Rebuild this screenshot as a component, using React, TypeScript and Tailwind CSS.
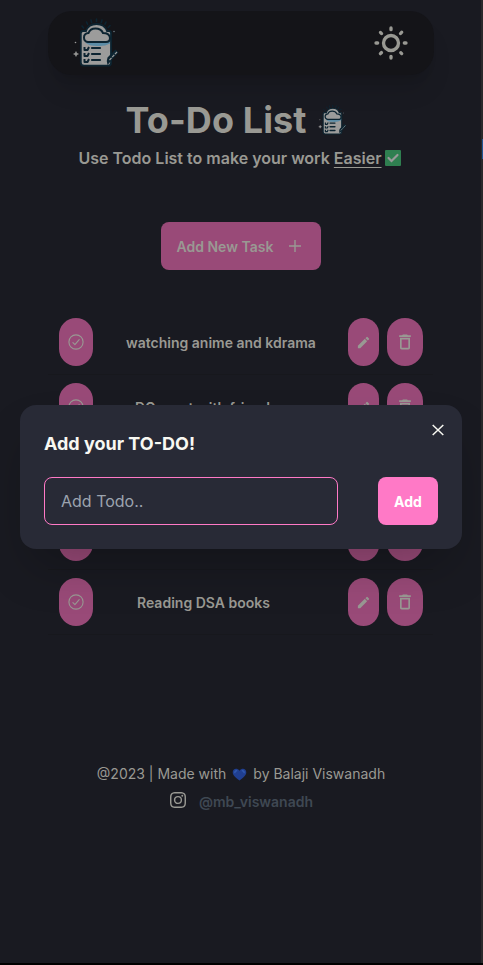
import React from "react";
import { MdEdit, MdDeleteOutline } from "react-icons/md";
import { BsInstagram } from "react-icons/bs";

const tasks = [
  { text: "watching anime and kdrama", pad: "pl-[33px]" },
  { text: "DO meet with friends", pad: "pl-[42px]" },
  { text: "", pad: "pl-[42px]" },
  { text: "", pad: "pl-[42px]" },
  { text: "Reading DSA books", pad: "pl-[44px]" },
];

function Logo({ className }: { className: string }) {
  return (
    <svg viewBox="0 0 46 52" className={className} fill="none">
      <g stroke="#0c2431" strokeWidth="1.6" strokeLinecap="round">
        <path d="M9 9l1.6 2M13.5 5l1 2.2M18 3l.6 2.5M23.5 2v2.5M29 3l-.7 2.5M33 5l-1 2.2M37 8.5l-1.8 2" />
      </g>
      <path
        d="M11 14h-1q-2.200 0-2.200 2.500V45.500q0 3.200 3.200 3.200h24q3 0 3-3V16q0-2-2-2h-2q-2.500-7-10.500-7T13 14z"
        fill="#9c9c9b"
        stroke="#0c2431"
        strokeWidth="1.8"
      />
      <path d="M12 24h25v2.500q-5 3-13 2.500-8 0-11-3z" fill="#5b8ca6" />
      <path
        d="M15 25q-4-.5-4-4.500 0-4 4.500-4.500Q17 11.500 22.500 11.500T30 16q6.500 0 7 5 0 4-4 4z"
        fill="#9c9c9b"
        stroke="#0c2431"
        strokeWidth="2"
      />
      <g stroke="#0c2431" strokeWidth="2.2" strokeLinecap="round">
        <path d="M19 31h8M19 37h8M19 43h8" />
      </g>
      <g stroke="#0c2431" strokeWidth="2" strokeLinejoin="round">
        <path d="M11.500 30v3h3l1.500-3M11.500 36v3h3l1.500-3M11.500 42v3h3l1.500-3" />
      </g>
      <path d="M34.500 48q-1.500-4 0-7.500l8-8 3 3-8 9z" fill="#0c2431" />
      <path d="M36.500 43l7.500-8" stroke="#9c9c9b" strokeWidth="1.2" strokeDasharray="3 1" />
      <path d="M3 34.500l.8 1.700 1.700.8-1.700.8L3 39.500l-.8-1.700L.5 37l1.700-.8z" fill="#9c9c9b" stroke="#9c9c9b" strokeWidth=".5" />
      <circle cx="2.500" cy="25.500" r=".8" fill="#9c9c9b" />
      <circle cx="41" cy="14.500" r=".8" fill="#68777d" />
    </svg>
  );
}

function SunIcon() {
  return (
    <svg viewBox="0 0 24 24" className="size-10 fill-current">
      <path d="M5.64,17l-.71.71a1,1,0,0,0,0,1.41,1,1,0,0,0,1.41,0l.71-.71A1,1,0,0,0,5.64,17ZM5,12a1,1,0,0,0-1-1H3a1,1,0,0,0,0,2H4A1,1,0,0,0,5,12Zm7-7a1,1,0,0,0,1-1V3a1,1,0,0,0-2,0V4A1,1,0,0,0,12,5ZM5.64,7.05a1,1,0,0,0,.7.29,1,1,0,0,0,.71-.29,1,1,0,0,0,0-1.41l-.71-.71A1,1,0,0,0,4.93,6.34Zm12,.29a1,1,0,0,0,.7-.29l.71-.71a1,1,0,1,0-1.41-1.41L17,5.64a1,1,0,0,0,0,1.41A1,1,0,0,0,17.66,7.34ZM21,11H20a1,1,0,0,0,0,2h1a1,1,0,0,0,0-2Zm-9,8a1,1,0,0,0-1,1v1a1,1,0,0,0,2,0V20A1,1,0,0,0,12,19ZM18.36,17A1,1,0,0,0,17,18.36l.71.71a1,1,0,0,0,1.41,0,1,1,0,0,0,0-1.41ZM12,6.5A5.5,5.5,0,1,0,17.5,12,5.51,5.51,0,0,0,12,6.5Zm0,9A3.5,3.5,0,1,1,15.5,12,3.5,3.5,0,0,1,12,15.5Z" />
    </svg>
  );
}

function CheckIcon() {
  return (
    <svg viewBox="0 0 18 18" className="size-[18px]" fill="none" stroke="currentColor" strokeWidth="1.1" strokeLinecap="round" strokeLinejoin="round">
      <circle cx="9" cy="9" r="7.1" />
      <path d="M5.9 9.6l2 2 4.300-5" />
    </svg>
  );
}

export default function App() {
  return (
    <div className="relative flex h-[965px] w-[483px] overflow-hidden bg-[#191a21] font-['Inter',sans-serif] text-[#999993]">
      <div className="flex w-[481px] flex-col items-center pt-[11px]">
        <header className="ml-[1px] flex h-16 w-[386px] shrink-0 items-center justify-between rounded-[24px] bg-[#141418] pl-[25px] pr-[23px] shadow-xl">
          <Logo className="h-[52px] w-[46px]" />
          <SunIcon />
        </header>

        <div className="mt-[25px] flex h-10 items-center pr-[9px]">
          <h1 className="text-[36px] leading-10 font-bold tracking-[0.1px] whitespace-nowrap">To-Do List</h1>
          <Logo className="ml-[11px] h-[32px] w-[29px]" />
        </div>
        <p className="mt-[6px] flex h-6 items-center pr-[2px] text-base font-semibold whitespace-nowrap">
          Use Todo List to make your work&nbsp;
          <span className="underline underline-offset-[3px]">Easier</span>
          <svg viewBox="0 0 16 16" className="ml-[3px] size-4">
            <rect width="16" height="16" rx="1" fill="#2f7f50" />
            <path d="M3.500 8l3 3 6-6" fill="none" stroke="#999" strokeWidth="2.2" strokeLinecap="round" />
          </svg>
        </p>

        <button className="mt-[52px] flex h-12 w-40 shrink-0 items-center rounded-lg bg-[#994a78] pl-4 text-sm font-semibold">
          <span className="pt-[2px] whitespace-nowrap">Add New Task</span>
          <svg viewBox="0 0 16 16" className="ml-[14px] size-4" fill="none" stroke="currentColor" strokeWidth="1.4">
            <path d="M8 2v12M2 8h12" />
          </svg>
        </button>

        <ul className="mt-[40px] w-[385px]">
          {tasks.map((task, i) => (
            <li key={i} className="flex h-[65px] items-center border-b border-[#17181d] pl-[11px] pr-[10px] text-sm font-semibold">
              <button className="flex h-12 w-[34px] items-center justify-center rounded-[17px] bg-[#994a78]">
                <CheckIcon />
              </button>
              <span className={`flex-1 pt-[2px] whitespace-nowrap ${task.pad}`}>{task.text}</span>
              <button className="flex h-12 w-[31px] items-center justify-center rounded-[16px] bg-[#994a78] pt-[1px]">
                <MdEdit size={15} />
              </button>
              <button className="ml-2 flex h-12 w-9 items-center justify-center rounded-[18px] bg-[#994a78]">
                <MdDeleteOutline size={20} />
              </button>
            </li>
          ))}
        </ul>

        <footer className="mt-[127px] flex flex-col items-center pl-[1px] text-sm">
          <p className="flex h-6 items-center whitespace-nowrap">
            @2023 | Made with
            <svg viewBox="0 0 16 14" className="mx-[6px] h-[13px] w-[15px]">
              <path d="M8 13.500C4 10.500.7 8 .7 4.500.7.500 5.500-.5 8 3c2.500-3.500 7.300-2.500 7.300 1.500 0 3.500-3.300 6-7.300 9z" fill="#203f91" />
              <path d="M3 5q0-2 2-2M11 3q2 0 2 2" fill="none" stroke="#315bb2" strokeWidth="1.5" strokeLinecap="round" />
            </svg>
            by Balaji Viswanadh
          </p>
          <div className="mt-[4px] flex h-6 items-center pl-[1px]">
            <BsInstagram className="mb-[4px] size-4" />
            <a className="ml-[13px] font-semibold text-[#3f4853]">@mb_viswanadh</a>
          </div>
        </footer>
      </div>

      <div className="h-full w-[2px] bg-[#29292b]">
        <div className="mt-[139px] ml-[1px] h-5 bg-[#1f5492]" />
      </div>

      <div className="absolute bottom-0 left-0 h-[2px] w-full bg-black" />

      <div
        role="dialog"
        className="absolute top-[405px] left-[20px] h-36 w-[442px] rounded-2xl bg-[#282a36] p-6 text-[#f8f8f2] shadow-2xl"
      >
        <svg viewBox="0 0 12 12" className="absolute top-[19px] right-[18px] size-3" stroke="currentColor" strokeWidth="1.5">
          <path d="M.7 1l10.600 10M11.300 1L.7 11" />
        </svg>
        <h3 className="pt-[1px] text-lg leading-7 font-bold">Add your TO-DO!</h3>
        <div className="mt-[19px] flex justify-between">
          <input
            placeholder="Add Todo.."
            className="h-12 w-[294px] rounded-lg border border-[#ff79c6] bg-[#282a36] px-4 text-base placeholder:text-[#9ca3af]"
          />
          <button className="h-12 w-[60px] rounded-lg bg-[#ff79c6] pt-[2px] text-sm font-bold text-white">Add</button>
        </div>
      </div>
    </div>
  );
}
